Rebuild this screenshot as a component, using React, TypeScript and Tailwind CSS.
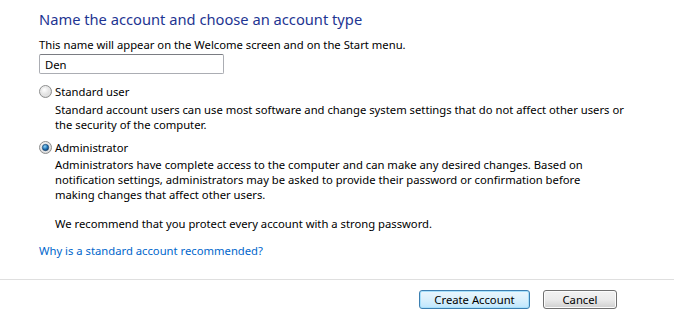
import React from 'react';

const Radio: React.FC<{ checked?: boolean }> = ({ checked }) => (
  <svg width="13" height="13" viewBox="0 0 13 13" className="shrink-0">
    <defs>
      <radialGradient id={checked ? 'rgc' : 'rgu'} cx="0.4" cy="0.35" r="0.7">
        <stop offset="0" stopColor="#ffffff" />
        <stop offset="1" stopColor="#cfcfcf" />
      </radialGradient>
      <radialGradient id="dot" cx="0.4" cy="0.35" r="0.7">
        <stop offset="0" stopColor="#8fd3f5" />
        <stop offset="0.6" stopColor="#1b6fb4" />
        <stop offset="1" stopColor="#0b3a6b" />
      </radialGradient>
    </defs>
    <circle cx="6.5" cy="6.5" r="6" fill={`url(#${checked ? 'rgc' : 'rgu'})`} stroke="#8e8f8f" strokeWidth="1" />
    <circle cx="6.5" cy="6.5" r="4.3" fill="none" stroke="#e8e8e8" strokeWidth="0.8" />
    {checked && <circle cx="6.5" cy="6.5" r="3.2" fill="url(#dot)" stroke="#1c3f63" strokeWidth="0.6" />}
  </svg>
);

const App: React.FC = () => {
  return (
    <div className="w-[674px] h-[327px] bg-white flex flex-col text-[11.25px] leading-[15px] text-black font-['Segoe_UI','Noto_Sans',sans-serif]">
      <div className="pl-[39px] pr-4 pt-[9px] flex-1">
        <h1 className="text-[14.7px] leading-[21px] text-[#1e3592] font-normal">
          Name the account and choose an account type
        </h1>
        <p className="mt-[7px]">This name will appear on the Welcome screen and on the Start menu.</p>
        <div className="mt-[2px] w-[185px] h-[20px] border border-[#abadb3] border-t-[#7a7c82] rounded-[2px] flex items-center px-[5px]">
          Den
        </div>

        <div className="mt-[10px] flex items-center gap-[3px]">
          <Radio />
          <span>Standard user</span>
        </div>
        <div className="pl-[16px] mt-[3px]">
          <p>Standard account users can use most software and change system settings that do not affect other users or<br />the security of the computer.</p>
        </div>

        <div className="mt-[8px] flex items-center gap-[3px]">
          <Radio checked />
          <span>Administrator</span>
        </div>
        <div className="pl-[16px] mt-[2px]">
          <p>Administrators have complete access to the computer and can make any desired changes. Based on<br />notification settings, administrators may be asked to provide their password or confirmation before<br />making changes that affect other users.</p>
          <p className="mt-[14px]">We recommend that you protect every account with a strong password.</p>
        </div>

        <a className="block mt-[12px] text-[#0066cc] w-fit cursor-pointer">Why is a standard account recommended?</a>
      </div>

      <div className="border-t border-[#dfdfdf] h-[48px] flex items-start justify-end pt-[10px] pr-[57px] gap-[13px]">
        <button className="w-[111px] h-[19px] rounded-[3px] border border-[#3c7fb1] bg-gradient-to-b from-[#eaf6fd] via-[#d9f0fc] to-[#bee6fd] text-[11.25px] leading-[15px] shadow-[inset_0_0_0_1px_#a7e0fb]">
          Create Account
        </button>
        <button className="w-[74px] h-[19px] rounded-[3px] border border-[#707070] bg-gradient-to-b from-[#f2f2f2] via-[#ebebeb] to-[#cfcfcf] text-[11.25px] leading-[15px] shadow-[inset_0_0_0_1px_#fcfcfc]">
          Cancel
        </button>
      </div>
    </div>
  );
};

export default App;
